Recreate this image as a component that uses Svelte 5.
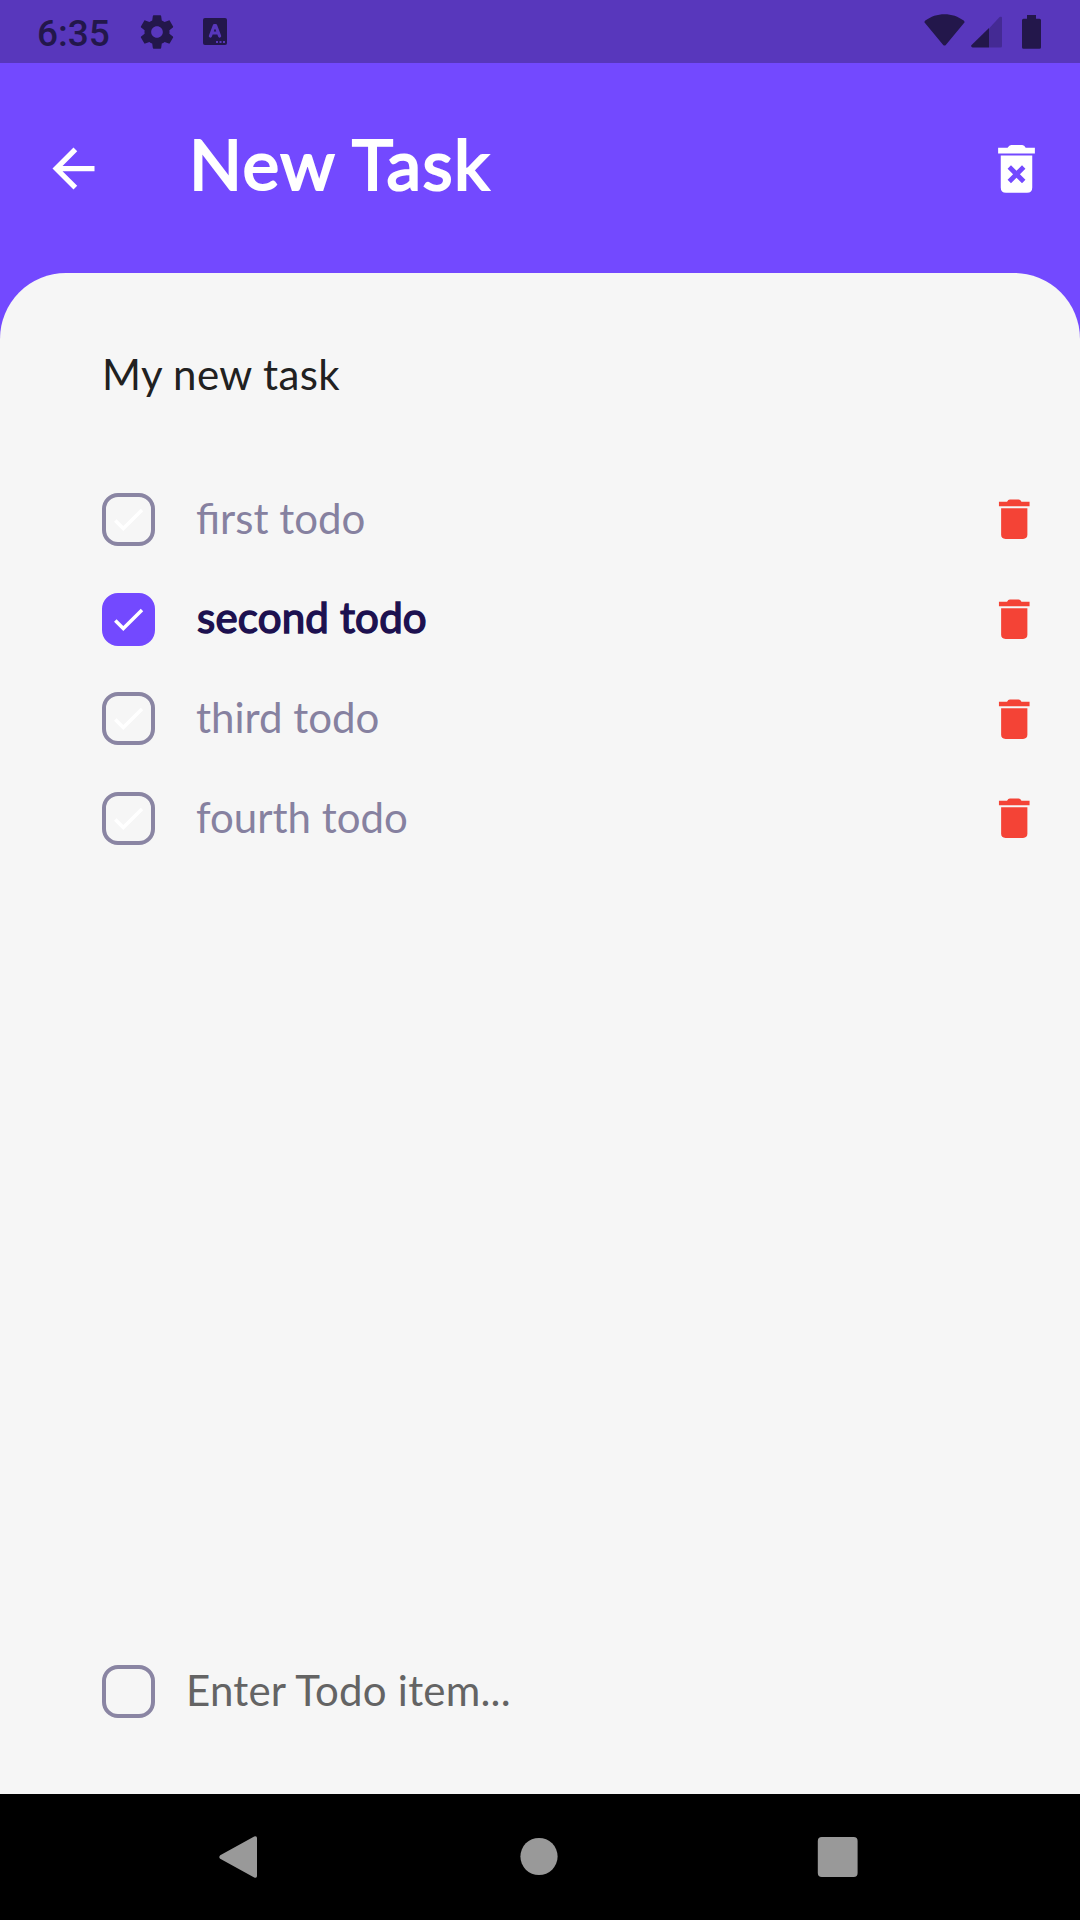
<script>
  let todos = $state([
    { label: 'first todo', done: false },
    { label: 'second todo', done: true },
    { label: 'third todo', done: false },
    { label: 'fourth todo', done: false }
  ]);
</script>

<div class="screen">
  <div class="status">
    <span class="clock">6:35</span>
    <svg class="gear" viewBox="0 0 24 24"><path d="M19.43 12.98c.04-.32.07-.64.07-.98s-.03-.66-.07-.98l2.11-1.65c.19-.15.24-.42.12-.64l-2-3.46c-.12-.22-.39-.3-.61-.22l-2.49 1c-.52-.4-1.08-.73-1.69-.98l-.38-2.65C14.46 2.18 14.25 2 14 2h-4c-.25 0-.46.18-.49.42l-.38 2.65c-.61.25-1.17.59-1.69.98l-2.49-1c-.23-.09-.49 0-.61.22l-2 3.46c-.13.22-.07.49.12.64l2.11 1.65c-.04.32-.07.65-.07.98s.03.66.07.98l-2.11 1.65c-.19.15-.24.42-.12.64l2 3.46c.12.22.39.3.61.22l2.49-1c.52.4 1.08.73 1.69.98l.38 2.65c.03.24.24.42.49.42h4c.25 0 .46-.18.49-.42l.38-2.65c.61-.25 1.17-.59 1.69-.98l2.49 1c.23.09.49 0 .61-.22l2-3.46c.12-.22.07-.49-.12-.64l-2.11-1.65zM12 15.5c-1.930 0-3.500-1.570-3.500-3.500s1.570-3.500 3.500-3.500 3.500 1.570 3.500 3.500-1.570 3.500-3.500 3.500z" /></svg>
    <svg class="keyboard" viewBox="0 0 24 27">
      <rect width="24" height="27" rx="2" />
      <path class="mark" d="M7.400 18 11.300 7.700h1.400L16.600 18M9 15h6" />
      <path class="dots" d="M13 24h2M16.500 24h2M20 24h2" />
    </svg>
    <span class="grow"></span>
    <svg class="wifi" viewBox="0 0 41 32"><path d="M1.200 9.300Q-.3 7.800 1.300 6.600C6.600 2.400 13.500.2 20.500.2s13.900 2.200 19.200 6.400q1.600 1.200.1 2.700L21.800 30.900q-1.300 1.300-2.600 0z" /></svg>
    <svg class="signal" viewBox="0 0 31 32">
      <path class="faint" d="M18 12.500 28.600 1Q31 0 31 2v28q0 1.500-1.500 1.500H18z" />
      <path d="M18 12v19.500H1.500Q-.8 30.500.6 29z" />
    </svg>
    <svg class="battery" viewBox="0 0 19 34"><path d="M5 0h9v3.700h3.500q1.500 0 1.500 1.500v27q0 1.500-1.500 1.500h-16Q0 33.700 0 32.200v-27q0-1.500 1.500-1.500H5z" /></svg>
  </div>

  <header>
    <svg class="icon" viewBox="0 0 24 24"><path d="M20 11H7.830l5.590-5.590L12 4l-8 8 8 8 1.410-1.410L7.830 13H20z" /></svg>
    <h1>New Task</h1>
    <svg class="icon" viewBox="0 0 24 24">
      <path d="M5 4.100h3.600Q9.200 3 10 3h4.200q.8 0 1.300 1.100H19v2.200H5z" />
      <path fill-rule="evenodd" d="M6 7h12v12.200q0 2-2 2H8q-2 0-2-2zM12 12.900l-2.100-2.100-1.300 1.300 2.100 2.100-2.100 2.100 1.300 1.300 2.100-2.100 2.100 2.100 1.300-1.300-2.100-2.100 2.100-2.100-1.300-1.300z" />
    </svg>
  </header>

  <main>
    <div class="sheet">
      <h2>My new task</h2>
      <ul>
        {#each todos as todo}
          <li class:done={todo.done}>
            <span class="box">
              <svg viewBox="0 0 53 53"><path d="M13.300 27.500l8 8L40 17" /></svg>
            </span>
            <span class="label">{todo.label}</span>
            <svg class="bin" viewBox="0 0 24 24">
              <path d="M5 4h3.700Q9.200 3 10 3h4q.8 0 1.300 1H19v2H5z" />
              <path d="M6 7h12v12q0 2-2 2H8q-2 0-2-2z" />
            </svg>
          </li>
        {/each}
      </ul>
      <div class="entry">
        <span class="box"></span>
        <span class="hint">Enter Todo item...</span>
      </div>
    </div>
  </main>

  <nav>
    <svg viewBox="0 0 42 42"><path d="M1.200 19.200 35.200.4Q38 -.5 38 2v38q0 2.500-2.800 1.500L1.200 22.800q-1.800-1.800 0-3.600z" /></svg>
    <svg viewBox="0 0 42 42"><circle cx="21" cy="20.500" r="18.600" /></svg>
    <svg viewBox="0 0 42 42"><rect x="0.800" y="1" width="39.800" height="40" rx="4" /></svg>
  </nav>
</div>

<style>
  :global(body) {
    margin: 0;
  }

  .screen {
    display: flex;
    flex-direction: column;
    width: 1080px;
    height: 1920px;
    background: #7349ff;
    font-family: Lato, "Noto Sans", sans-serif;
    font-size: 42px;
    line-height: 1.2;
  }

  svg {
    display: block;
    flex: none;
  }

  .status {
    display: flex;
    align-items: center;
    box-sizing: border-box;
    height: 63px;
    padding: 0 39px 0 37px;
    background: #5837bc;
    fill: #23174b;
  }

  .clock {
    width: 100px;
    padding-top: 4px;
    color: #23174b;
    font: 500 37px Roboto, sans-serif;
  }

  .gear {
    width: 40px;
    height: 40px;
  }

  .keyboard {
    width: 24px;
    height: 27px;
    margin-left: 26px;
  }

  .mark {
    fill: none;
    stroke: #5837bc;
    stroke-width: 3.200;
    stroke-linejoin: round;
    stroke-linecap: round;
  }

  .dots {
    stroke: #5837bc;
    stroke-width: 2;
  }

  .grow {
    flex: 1;
  }

  .wifi {
    width: 41px;
    height: 32px;
    margin-right: 6px;
    padding-bottom: 3px;
  }

  .signal {
    width: 31px;
    height: 32px;
    margin-right: 20px;
  }

  .faint {
    fill: #442a94;
  }

  .battery {
    width: 19px;
    height: 34px;
  }

  header {
    display: flex;
    align-items: center;
    box-sizing: border-box;
    height: 210px;
    padding: 0 32px 0 42px;
    color: #fff;
    fill: #fff;
  }

  .icon {
    width: 63px;
    height: 63px;
  }

  h1 {
    flex: 1;
    margin: 0 0 0 84px;
    padding-bottom: 8px;
    font-size: 69.500px;
    font-weight: 400;
    letter-spacing: 1.450px;
    -webkit-text-stroke: 2.200px currentColor;
  }

  main {
    display: flex;
    flex: 1;
  }

  .sheet {
    display: flex;
    flex: 1;
    flex-direction: column;
    box-sizing: border-box;
    padding: 51px 40px 76px 102px;
    border-radius: 66px 66px 0 0;
    background: #f6f6f6;
  }

  h2 {
    margin: 0 0 45.500px;
    color: #212121;
    font-size: 42px;
    font-weight: 400;
    letter-spacing: 0.400px;
    line-height: 100px;
  }

  ul {
    flex: 1;
    margin: 0;
    padding: 0;
    list-style: none;
  }

  li {
    display: flex;
    align-items: center;
    height: 99.750px;
  }

  .box {
    flex: none;
    box-sizing: border-box;
    width: 53px;
    height: 53px;
    border: 4px solid #8a85a3;
    border-radius: 16px;
  }

  .box svg {
    width: 53px;
    height: 53px;
    margin: -4px;
    fill: none;
    stroke: #fff;
    stroke-width: 3.500;
  }

  .done .box {
    border-color: #7349ff;
    background: #7349ff;
  }

  .label {
    flex: 1;
    margin-left: 41px;
    padding-bottom: 3px;
    color: #8681a0;
  }

  .done .label {
    margin-left: 42px;
    color: #1d1150;
    letter-spacing: 0.200px;
    -webkit-text-stroke: 1.500px currentColor;
  }

  .bin {
    width: 52.500px;
    height: 52.500px;
    fill: #f44336;
  }

  .entry {
    display: flex;
    align-items: center;
    height: 53px;
  }

  .hint {
    margin-left: 31px;
    padding-bottom: 3px;
    color: #646464;
    letter-spacing: 0.220px;
  }

  nav {
    display: flex;
    align-items: center;
    justify-content: center;
    gap: 257px;
    height: 126px;
    padding-right: 2px;
    background: #000;
    fill: #999;
  }

  nav svg {
    width: 42px;
    height: 42px;
  }
</style>
